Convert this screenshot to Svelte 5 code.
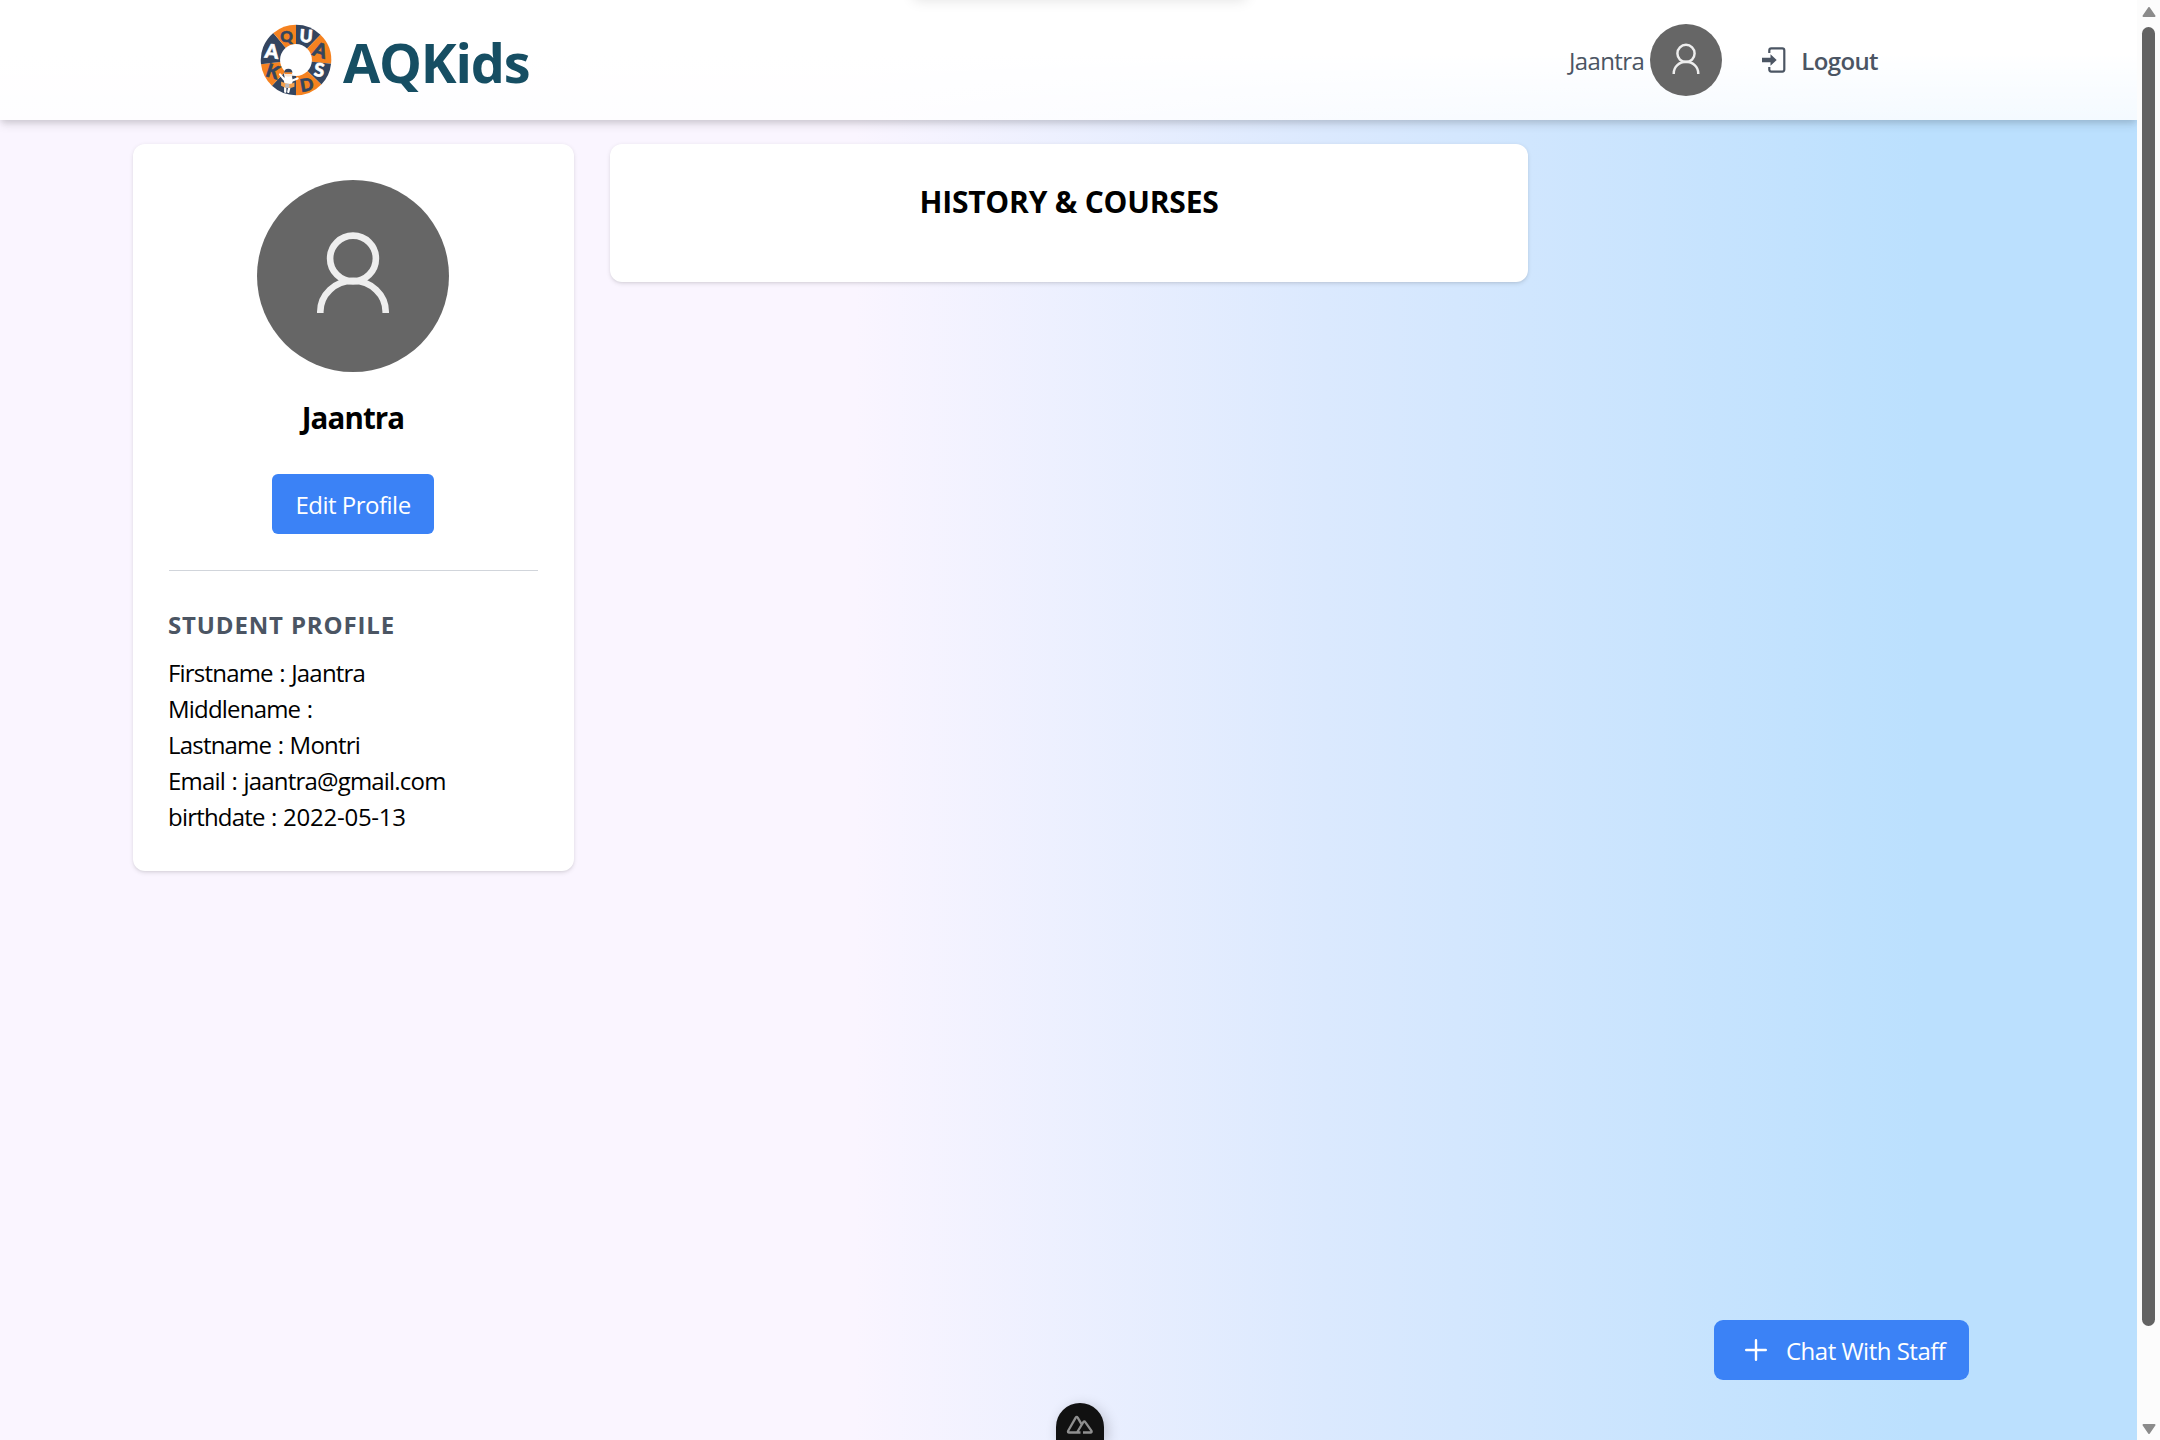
<script>
  // Ring segments: start/end angle, letter with its position, tilt and size.
  const wedges = [
    { ch: 'U', from: 0, to: 44, x: 10, y: -23.5, tilt: 4, size: 17, fill: '#34455f', ink: '#fff' },
    { ch: 'A', from: 44, to: 96, x: 23.5, y: -9.5, tilt: 18, size: 19, fill: '#f58220', ink: '#34455f' },
    { ch: 'S', from: 96, to: 134, x: 22.5, y: 9.5, tilt: 8, size: 18, fill: '#34455f', ink: '#fff' },
    { ch: 'D', from: 134, to: 180, x: 10.5, y: 24, tilt: -10, size: 17, fill: '#f58220', ink: '#34455f' },
    { ch: '', from: 180, to: 223, x: 0, y: 0, tilt: 0, size: 0, fill: '#34455f', ink: '#fff' },
    { ch: 'K', from: 223, to: 263, x: -22.5, y: 11, tilt: 18, size: 18, fill: '#f58220', ink: '#34455f' },
    { ch: 'A', from: 263, to: 320, x: -23.5, y: -8.5, tilt: 6, size: 19, fill: '#34455f', ink: '#fff' },
    { ch: 'Q', from: 320, to: 360, x: -9.3, y: -22.5, tilt: 0, size: 15, fill: '#f58220', ink: '#34455f' }
  ];
  const pt = (deg) => {
    const r = (deg * Math.PI) / 180;
    return `${(34.3 * Math.sin(r)).toFixed(2)} ${(-34.3 * Math.cos(r)).toFixed(2)}`;
  };
  const student = [
    { label: 'Firstname', value: 'Jaantra' },
    { label: 'Middlename', value: '' },
    { label: 'Lastname', value: 'Montri' },
    { label: 'Email', value: 'jaantra@gmail.com' },
    { label: 'birthdate', value: '2022-05-13', numeric: true }
  ];
</script>

{#snippet person()}
  <svg class="person" viewBox="0 0 192 192" aria-hidden="true">
    <g fill="none" stroke="#eee" stroke-width="6.6">
      <circle cx="96" cy="78.5" r="22.9" />
      <path d="M63.3 133v-1.2a32.7 31 0 0 1 65.4 0v1.2" />
    </g>
  </svg>
{/snippet}

<div class="screen">
  <div class="page">
    <header>
      <a class="brand" href="#home">
        <svg class="logo" viewBox="-36 -36 72 72" aria-hidden="true">
          {#each wedges as w}
            <path d="M0 0L{pt(w.from)}A34.3 34.3 0 0 1 {pt(w.to)}Z" fill={w.fill} />
          {/each}
          <circle r="15.5" fill="#fff" />
          {#each wedges as w}
            <g transform="translate({w.x} {w.y}) rotate({w.tilt})">
              <text class="ring" y={w.size * 0.36} font-size={w.size} fill={w.ink} stroke={w.ink}>{w.ch}</text>
            </g>
          {/each}
          <g transform="translate(-7.5 18)">
            <path d="M-8-4l4 5M9 0L4 2M-3 8l0 5M1 9l-1 4" stroke="#fff" stroke-width="2.2" stroke-linecap="round" />
            <ellipse cx="0" cy="2" rx="4.2" ry="7" fill="#fff" />
            <circle cx="0" cy="-4" r="4.2" fill="#f8e7d8" />
            <path d="M-4-5.5a4 4 0 0 1 8 0z" fill="#34455f" />
            <path d="M-3.6-5.2h7.2" stroke="#f58220" stroke-width="1.5" />
            <path d="M-3.2-2.6q3.2 2 6.4 0v3q-3.2 2.4-6.4 0z" fill="#fff" />
            <path d="M-7 3q7 4 13 1v4q-7 3-13-1z" fill="#f5a04c" />
            <path d="M-3 5h4v4h-4z" fill="#b9bbc2" />
          </g>
        </svg>
        <span class="wordmark">AQKids</span>
      </a>
      <nav>
        <span class="user">Jaantra</span>
        <span class="avatar small">{@render person()}</span>
        <a class="logout" href="#logout">
          <svg viewBox="0 0 24 26" aria-hidden="true">
            <path d="M7.3 6V3.4a2 2 0 0 1 2-2h11a2 2 0 0 1 2 2v19.2a2 2 0 0 1-2 2h-11a2 2 0 0 1-2-2V20" fill="none" stroke="#4b5563" stroke-width="2.2" />
            <path d="M0 10.7h8.5V7.3l6.2 5.7-6.2 5.7v-3.4H0z" fill="#4b5563" />
          </svg>
          <span>Logout</span>
        </a>
      </nav>
    </header>

    <main>
      <section class="card profile">
        <span class="avatar large">{@render person()}</span>
        <h1>Jaantra</h1>
        <button class="edit">Edit Profile</button>
        <hr />
        <h2>STUDENT PROFILE</h2>
        <ul>
          {#each student as row}
            <li>{row.label} : <span class:numeric={row.numeric}>{row.value}</span></li>
          {/each}
        </ul>
      </section>
      <section class="card history">
        <h2>HISTORY &amp; COURSES</h2>
      </section>
    </main>

    <div class="top-shadow"></div>
    <button class="chat">
      <svg viewBox="0 0 22 22" aria-hidden="true"><path d="M11 1.2v19.6M1.2 11h19.6" stroke="#fff" stroke-width="2.4" stroke-linecap="round" /></svg>
      <span>Chat With Staff</span>
    </button>
    <div class="devtools">
      <svg viewBox="0 0 28 20" aria-hidden="true">
        <path d="M14.5 17.5H3.2q-1.8 0-1-1.7L9.7 2.6q1-1.5 2 0l3.8 6.5M11 17.5l6.3-10.4q1-1.5 2 0l6.2 8.8q.6 1.6-1 1.6H17" fill="none" stroke="#8f8f8f" stroke-width="2.3" stroke-linejoin="round" />
      </svg>
    </div>
  </div>

  <div class="scrollbar">
    <svg viewBox="0 0 14 10" aria-hidden="true"><path d="M7 1l5.5 8h-11z" fill="#8b8b8b" stroke="#8b8b8b" stroke-linejoin="round" stroke-width="2" /></svg>
    <div class="thumb"></div>
    <svg viewBox="0 0 14 10" aria-hidden="true"><path d="M7 9l5.5-8h-11z" fill="#8b8b8b" stroke="#8b8b8b" stroke-linejoin="round" stroke-width="2" /></svg>
  </div>
</div>

<style>
  :global(body) { margin: 0; overflow: hidden; }
  .screen, .screen * { box-sizing: border-box; }
  .screen {
    display: flex;
    width: 2160px;
    height: 1440px;
    font: 24px/36px "Segoe UI", "Open Sans", "Noto Sans", sans-serif;
    color: #000;
  }
  .page {
    position: relative;
    flex: 1;
    overflow: hidden;
    background: linear-gradient(90deg, #faf5ff 0%, #faf5ff 40%, #dbe9fe 62%, #bbe0fe 90%, #bbe0fe 100%);
  }
  svg { display: block; flex: none; }
  a { color: inherit; text-decoration: none; }
  h1, h2, ul { margin: 0; padding: 0; }
  button { border: 0; font: inherit; color: #fff; background: #3b82f6; }

  header {
    display: flex;
    align-items: center;
    justify-content: space-between;
    height: 120px;
    padding: 0 259px;
    background: linear-gradient(to bottom, #fff 45%, rgba(255, 255, 255, 0.84));
    box-shadow: 0 6px 9px -1px rgba(0, 0, 0, 0.1), 0 3px 6px -1px rgba(0, 0, 0, 0.1);
  }
  .brand { display: flex; align-items: center; gap: 10px; }
  .logo { width: 74px; height: 74px; }
  .ring { font-family: "Lato", sans-serif; font-weight: 900; text-anchor: middle; stroke-width: 0.6px; }
  .wordmark {
    padding-top: 3px;
    font-size: 54px;
    line-height: 60px;
    font-weight: 700;
    letter-spacing: -1.2px;
    color: #164e63;
  }
  nav { display: flex; align-items: center; color: #4b5563; }
  .user { margin-right: 6px; padding-top: 2px; letter-spacing: -0.6px; }
  .avatar { display: block; border-radius: 50%; background: #666; }
  .person { width: 100%; height: 100%; }
  .small { width: 72px; height: 72px; }
  .large { width: 192px; height: 192px; }
  .logout { display: flex; align-items: center; gap: 15px; margin-left: 40px; font-weight: 600; letter-spacing: -0.6px; }
  .logout svg { width: 24px; height: 26px; }
  .logout span { padding-top: 2px; }

  main { display: flex; align-items: flex-start; gap: 36px; padding: 24px 0 0 133px; }
  .card {
    border-radius: 12px;
    background: #fff;
    box-shadow: 0 1.5px 4.5px rgba(0, 0, 0, 0.1), 0 1.5px 3px -1.5px rgba(0, 0, 0, 0.1);
  }
  .profile { display: flex; flex-direction: column; align-items: center; width: 441px; height: 727px; padding: 36px 36px 36px 35px; }
  .profile h1 { margin-top: 25px; font-size: 29.5px; line-height: 42px; font-weight: 700; letter-spacing: -0.9px; }
  .edit { width: 162px; height: 60px; margin-top: 35px; padding: 2px 0 0; border-radius: 6px; letter-spacing: -0.5px; }
  .profile hr { width: 369px; height: 1px; margin: 36px 0; border: 0; background: #d1d5db; }
  .profile h2 { align-self: stretch; font-size: 24px; line-height: 36px; letter-spacing: 0.85px; color: #4b5563; }
  .profile ul { align-self: stretch; margin-top: 12px; list-style: none; letter-spacing: -0.8px; word-spacing: 1px; }
  .numeric { letter-spacing: -0.25px; }
  .history { width: 918px; height: 138px; padding-top: 36px; text-align: center; }
  .history h2 { font-size: 30px; line-height: 44px; font-weight: 700; letter-spacing: -0.2px; }

  .top-shadow {
    position: absolute;
    top: -20px;
    left: 914px;
    width: 332px;
    height: 20px;
    box-shadow: 0 0 14px rgba(0, 0, 0, 0.12);
  }
  .chat {
    position: absolute;
    right: 168px;
    bottom: 60px;
    display: flex;
    align-items: center;
    gap: 19px;
    width: 255px;
    height: 60px;
    padding: 0 0 0 31px;
    border-radius: 9px;
    letter-spacing: -0.5px;
    white-space: nowrap;
  }
  .chat svg { width: 22px; height: 22px; }
  .chat span { padding-top: 2px; }
  .devtools {
    position: absolute;
    left: 1056px;
    bottom: 0;
    display: flex;
    justify-content: center;
    width: 48px;
    height: 37px;
    padding-top: 12px;
    border-radius: 24px 24px 0 0;
    background: #111;
    box-shadow: 3px 3px 14px rgba(0, 0, 0, 0.2);
  }
  .devtools svg { width: 28px; height: 20px; }
  .scrollbar {
    display: flex;
    flex-direction: column;
    align-items: center;
    width: 23px;
    padding: 7px 0 6px;
    background: #fcfcfc;
  }
  .scrollbar svg { width: 14px; height: 10px; }
  .thumb { width: 13px; height: 1299px; margin: 10px 0 auto; border-radius: 7px; background: #636363; }
</style>
